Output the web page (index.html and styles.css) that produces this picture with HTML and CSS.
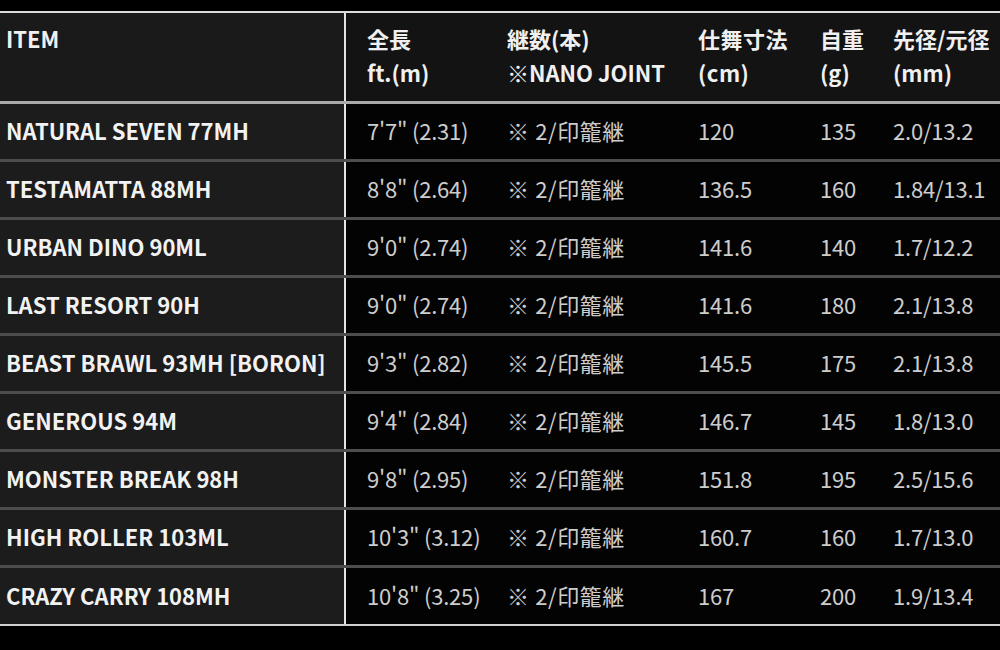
FILE: index.html
```html
<!DOCTYPE html>
<html lang="ja">
<head>
<meta charset="utf-8">
<title>Spec table</title>
<link rel="stylesheet" href="styles.css">
</head>
<body>
<div class="spec">
  <div class="row head">
    <div class="cell item">ITEM</div>
    <div class="cell c2">全長<br>ft.(m)</div>
    <div class="cell c3">継数(本)<br>※NANO JOINT</div>
    <div class="cell c4">仕舞寸法<br>(cm)</div>
    <div class="cell c5">自重<br>(g)</div>
    <div class="cell c6">先径/元径<br>(mm)</div>
  </div>
  <div class="row">
    <div class="cell item">NATURAL SEVEN 77MH</div>
    <div class="cell c2">7'7" (2.31)</div>
    <div class="cell c3">※ 2/印籠継</div>
    <div class="cell c4">120</div>
    <div class="cell c5">135</div>
    <div class="cell c6">2.0/13.2</div>
  </div>
  <div class="row">
    <div class="cell item">TESTAMATTA 88MH</div>
    <div class="cell c2">8'8" (2.64)</div>
    <div class="cell c3">※ 2/印籠継</div>
    <div class="cell c4">136.5</div>
    <div class="cell c5">160</div>
    <div class="cell c6">1.84/13.1</div>
  </div>
  <div class="row">
    <div class="cell item">URBAN DINO 90ML</div>
    <div class="cell c2">9'0" (2.74)</div>
    <div class="cell c3">※ 2/印籠継</div>
    <div class="cell c4">141.6</div>
    <div class="cell c5">140</div>
    <div class="cell c6">1.7/12.2</div>
  </div>
  <div class="row">
    <div class="cell item">LAST RESORT 90H</div>
    <div class="cell c2">9'0" (2.74)</div>
    <div class="cell c3">※ 2/印籠継</div>
    <div class="cell c4">141.6</div>
    <div class="cell c5">180</div>
    <div class="cell c6">2.1/13.8</div>
  </div>
  <div class="row">
    <div class="cell item">BEAST BRAWL 93MH [BORON]</div>
    <div class="cell c2">9'3" (2.82)</div>
    <div class="cell c3">※ 2/印籠継</div>
    <div class="cell c4">145.5</div>
    <div class="cell c5">175</div>
    <div class="cell c6">2.1/13.8</div>
  </div>
  <div class="row">
    <div class="cell item">GENEROUS 94M</div>
    <div class="cell c2">9'4" (2.84)</div>
    <div class="cell c3">※ 2/印籠継</div>
    <div class="cell c4">146.7</div>
    <div class="cell c5">145</div>
    <div class="cell c6">1.8/13.0</div>
  </div>
  <div class="row">
    <div class="cell item">MONSTER BREAK 98H</div>
    <div class="cell c2">9'8" (2.95)</div>
    <div class="cell c3">※ 2/印籠継</div>
    <div class="cell c4">151.8</div>
    <div class="cell c5">195</div>
    <div class="cell c6">2.5/15.6</div>
  </div>
  <div class="row">
    <div class="cell item">HIGH ROLLER 103ML</div>
    <div class="cell c2">10'3" (3.12)</div>
    <div class="cell c3">※ 2/印籠継</div>
    <div class="cell c4">160.7</div>
    <div class="cell c5">160</div>
    <div class="cell c6">1.7/13.0</div>
  </div>
  <div class="row last">
    <div class="cell item">CRAZY CARRY 108MH</div>
    <div class="cell c2">10'8" (3.25)</div>
    <div class="cell c3">※ 2/印籠継</div>
    <div class="cell c4">167</div>
    <div class="cell c5">200</div>
    <div class="cell c6">1.9/13.4</div>
  </div>
</div>
</body>
</html>
```

FILE: styles.css
```css
* { box-sizing: border-box; }
html, body {
  margin: 0;
  padding: 0;
  background: #000;
  width: 1000px;
  height: 650px;
  overflow: hidden;
}
body {
  font-family: "Noto Sans CJK JP", "Noto Sans", sans-serif;
  color: #cdcdcd;
  padding-top: 11px;
}
.spec {
  border-top: 2px solid #dcdcdc;
  border-bottom: 2px solid #d0d0d0;
}
.row {
  display: grid;
  grid-template-columns: 346px 161px 191px 122px 73px 1fr;
  height: 58px;
  border-bottom: 3px solid #4d4d4d;
  background: #030303;
}
.row.last {
  height: 56px;
  border-bottom: none;
}
.row.head {
  height: 91px;
  border-bottom: 3px solid #a9a9a9;
  background: #131313;
}
.cell {
  display: flex;
  align-items: center;
  padding-bottom: 3px;
  font-size: 22px;
  white-space: nowrap;
  letter-spacing: -0.2px;
}
.c3 { letter-spacing: 0.6px; }
.item {
  background: #1c1c1c;
  border-right: 2px solid #e4e4e4;
  padding-left: 6px;
  font-weight: 700;
  color: #f2f2f2;
  letter-spacing: 0;
}
.c2 { padding-left: 21px; }
.head .cell {
  display: block;
  padding-top: 8px;
  padding-bottom: 0;
  line-height: 34px;
  font-weight: 700;
  color: #f0f0f0;
  letter-spacing: 0;
}
.head .item {
  background: #1a1a1a;
}
.head .c4 { letter-spacing: 0.5px; }
```
